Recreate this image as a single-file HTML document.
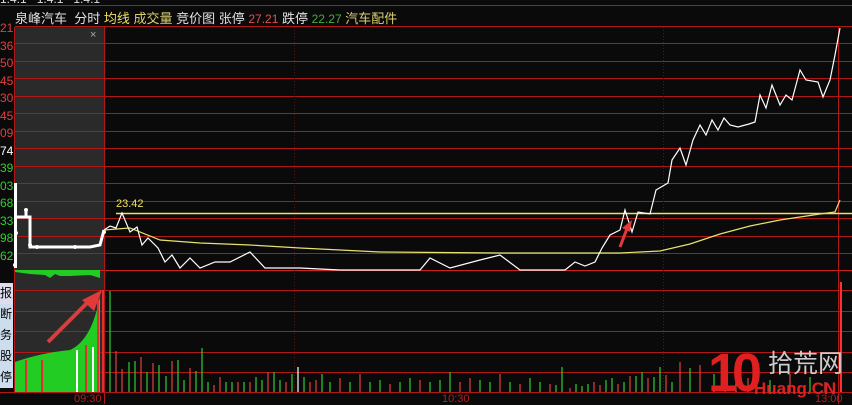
<!DOCTYPE html>
<html><head><meta charset="utf-8"><style>
body{margin:0;width:852px;height:404px;background:#0b0a0a;overflow:hidden;font-family:"Liberation Sans","Noto Sans CJK SC",sans-serif;}
svg{position:absolute;left:0;top:0}
.t{position:absolute;top:8px;font-size:13px;white-space:nowrap}
</style></head><body>
<svg width="852" height="404">
<rect x="15" y="27" width="89" height="365" fill="#2a2a2a"/>
<g stroke="#b01818" stroke-width="1">
<line x1="0" y1="5.5" x2="852" y2="5.5"/>
<line x1="15" y1="26.5" x2="852" y2="26.5"/><line x1="15" y1="43.5" x2="852" y2="43.5"/><line x1="15" y1="61.5" x2="852" y2="61.5"/><line x1="15" y1="78.5" x2="852" y2="78.5"/><line x1="15" y1="96.5" x2="852" y2="96.5"/><line x1="15" y1="113.5" x2="852" y2="113.5"/><line x1="15" y1="131.5" x2="852" y2="131.5"/><line x1="15" y1="148.5" x2="852" y2="148.5"/><line x1="15" y1="166.5" x2="852" y2="166.5"/><line x1="15" y1="183.5" x2="852" y2="183.5"/><line x1="15" y1="201.5" x2="852" y2="201.5"/><line x1="15" y1="218.5" x2="852" y2="218.5"/><line x1="15" y1="236.5" x2="852" y2="236.5"/><line x1="15" y1="253.5" x2="852" y2="253.5"/>
<line x1="15" y1="270.5" x2="852" y2="270.5" stroke="#d02020"/>
<line x1="15" y1="290.5" x2="852" y2="290.5"/><line x1="15" y1="311.5" x2="852" y2="311.5"/><line x1="15" y1="331.5" x2="852" y2="331.5"/><line x1="15" y1="352.5" x2="852" y2="352.5"/><line x1="15" y1="372.5" x2="852" y2="372.5"/><line x1="0" y1="392.5" x2="852" y2="392.5"/>
<line x1="104.5" y1="27" x2="104.5" y2="404"/><line x1="838.5" y1="27" x2="838.5" y2="404"/><line x1="14.5" y1="27" x2="14.5" y2="392"/>
</g>
<g stroke="#5a1414" stroke-dasharray="1,2"><line x1="294.5" y1="27" x2="294.5" y2="392"/><line x1="663.5" y1="27" x2="663.5" y2="392"/></g>
<path d="M15,270 L100,270 L100,278 L90,275 L70,276 L60,276 L55,274 L50,278 L45,275 L30,274 L15,272Z" fill="#22cc22"/>
<path d="M15,362 Q40,353 70,350 Q92,340 100,296 L100,392 L15,392Z" fill="#22cc22"/>
<g stroke-width="2"><line x1="26" y1="360" x2="26" y2="392" stroke="#e03030"/><line x1="42" y1="360" x2="42" y2="392" stroke="#e03030"/><line x1="77" y1="350" x2="77" y2="392" stroke="#fff"/><line x1="86" y1="345" x2="86" y2="392" stroke="#e03030"/><line x1="93" y1="347" x2="93" y2="392" stroke="#fff"/><line x1="98" y1="300" x2="98" y2="392" stroke="#e03030"/><line x1="103" y1="290" x2="103" y2="392" stroke="#e03030"/></g>
<path d="M15.5,268 L15.5,183 M15,217 L30,217 L30,247 L90,247 L100,245 L104,230" stroke="#fff" stroke-width="3" fill="none"/>
<path d="M26,210 L26,217" stroke="#fff" stroke-width="3"/>
<g fill="#fff"><circle cx="26" cy="210" r="2"/><circle cx="16" cy="233" r="2"/><circle cx="30" cy="245" r="2"/><circle cx="37" cy="247" r="2"/><circle cx="75" cy="247" r="2"/><circle cx="104" cy="232" r="2"/><circle cx="15" cy="265" r="2"/></g>
<path d="M48,342 L92,298" stroke="#e03a3a" stroke-width="4"/><path d="M102,290 L82,300 L94,311Z" fill="#e03a3a"/>
<line x1="116" y1="213.5" x2="852" y2="213.5" stroke="#f0e060" stroke-width="1.5"/>
<polyline fill="none" stroke="#e8e070" stroke-width="1.2" points="104,230 130,228 160,240 200,243 250,245 300,248 380,252 500,253 620,253 660,251 690,244 720,234 750,226 780,220 820,214 835,212 840,200"/>
<polyline fill="none" stroke="#fff" stroke-width="1.2" points="104,230 110,226 116,228 122,213 130,232 137,227 142,245 148,238 158,248 165,262 172,255 180,268 190,258 200,268 215,262 230,262 250,252 265,268 300,268 340,270 420,270 430,258 450,268 480,260 500,255 520,270 565,270 575,262 585,266 595,262 602,248 610,235 620,230 625,210 632,232 638,212 650,214 656,190 668,183 672,160 680,148 686,165 693,140 700,125 706,135 712,120 718,130 724,118 730,125 738,127 749,124 755,122 760,95 766,108 772,85 780,105 786,95 792,100 800,70 806,80 818,82 823,97 830,80 835,55 840,28"/>
<path d="M620,247 L628,226" stroke="#e03a3a" stroke-width="3"/><path d="M632,220 L622,228 L630,232Z" fill="#e03a3a"/>
<g stroke-width="1.2" id="v"></g>
<line x1="841" y1="282" x2="841" y2="392" stroke="#ff3030" stroke-width="2"/>
</svg>
<div class="t" style="left:0;top:-8px;color:#ddd;font-size:12px">1.4.1 &nbsp;&nbsp;1.4.1 &nbsp;&nbsp;1.4.1</div>
<div class="t" style="left:15px;color:#e0e0e0">泉峰汽车 &nbsp;分时 <span style="color:#f0e060">均线</span> <span style="color:#d8d070">成交量</span> 竞价图 张停 <span style="color:#e05050;font-size:12px">27.21</span> 跌停 <span style="color:#40b040;font-size:12px">22.27</span> <span style="color:#d8d070">汽车配件</span></div>
<div style="position:absolute;left:90px;top:29px;color:#aaa;font-size:11px">×</div>
<div style="position:absolute;left:116px;top:198px;color:#f0e060;font-size:11px">23.42</div>
<div style="position:absolute;left:0;top:20px;font-size:12px;line-height:17.5px;color:#e04040">21<br>36<br>50<br>45<br>30<br>45<br>09<br><span style="color:#fff">74</span><br><span style="color:#3c3">39<br>03<br>68<br>33<br>98<br>62</span></div>
<div style="position:absolute;left:0;top:283px;width:13px;font-size:12px;line-height:21px;color:#000">
<div style="background:#dde">报</div><div style="background:#cde">断</div><div style="background:#cde">务</div><div style="background:#cde">股</div><div style="background:#cde">停</div></div>
<div style="position:absolute;left:74px;top:393px;color:#b02020;font-size:11px">09:30</div>
<div style="position:absolute;left:442px;top:393px;color:#b02020;font-size:11px">10:30</div>
<div style="position:absolute;left:815px;top:393px;color:#b02020;font-size:11px">13:00</div>
<div style="position:absolute;left:708px;top:346px;font:bold 54px/1 'Liberation Sans',sans-serif;color:#e02020;letter-spacing:-6px">10</div>
<div style="position:absolute;left:768px;top:352px;font-size:25px;line-height:1;color:#ccc;font-family:'Liberation Sans','Noto Sans CJK SC',sans-serif">拾荒网</div>
<div style="position:absolute;left:754px;top:380px;font:bold 17px/1 'Liberation Sans',sans-serif;color:#e02020">Huang.CN</div>
<script>
var g=document.getElementById('v'),s='';
var xs=[110,116,122,129,135,141,147,153,159,166,172,178,184,190,196,202,208,214,220,226,232,238,244,250,256,262,268,274,280,286,292,298,304,310,316,322,330,340,350,360,370,380,390,400,410,420,430,440,450,460,470,480,490,500,510,520,530,540,550,556,562,570,576,582,588,594,600,606,612,618,624,630,636,642,648,654,660,666,672];
var hs=[101,41,23,30,31,35,20,29,27,16,31,32,12,24,21,44,10,7,15,10,10,10,10,10,15,12,20,20,12,10,18,25,15,10,12,18,10,14,10,18,10,12,8,10,14,12,10,12,20,10,14,12,10,18,10,8,14,10,8,7,25,4,8,6,8,10,7,12,14,8,10,16,16,20,14,15,25,17,10];
var cl=['#3c3','#e04040','#e04040','#3c3','#3c3','#e04040','#3c3','#e04040','#3c3','#3c3','#e04040','#3c3','#3c3','#e04040','#3c3','#3c3'];
for(var i=0;i<xs.length;i++){var c=i==31?'#fff':cl[i%cl.length];s+='<line x1="'+xs[i]+'" y1="'+(392-hs[i])+'" x2="'+xs[i]+'" y2="392" stroke="'+c+'"/>';}
var ys=[[680,30],[690,24],[700,27],[714,18],[725,16],[736,20],[748,14],[770,12],[790,18],[810,15],[825,10]];
ys.forEach(function(p,i){s+='<line x1="'+p[0]+'" y1="'+(392-p[1])+'" x2="'+p[0]+'" y2="392" stroke="'+(i%2?'#3c3':'#e04040')+'"/>';});
g.innerHTML=s;
</script>
</body></html>
